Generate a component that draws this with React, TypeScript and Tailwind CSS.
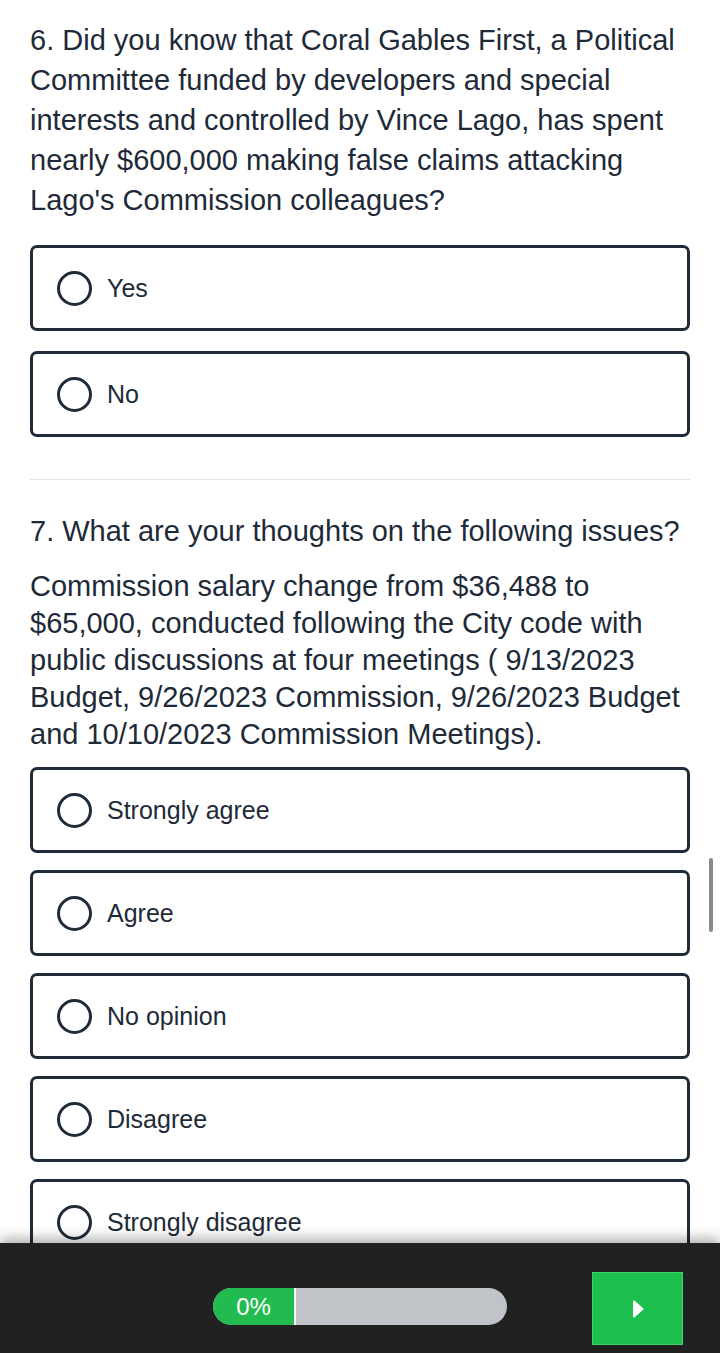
import { Fragment } from 'react';

const font = { fontFamily: '"Liberation Sans", Arial, sans-serif' };

function Option({ label, gap }: { label: string; gap: string }) {
    return (
        <div className={`flex items-center h-[86px] border-[3px] border-[#1f2b38] rounded-[7px] pl-[24px] ${gap}`}>
            <span className="w-[35px] h-[35px] rounded-full border-[3px] border-[#1f2b38] shrink-0" />
            <span className="ml-[15px] text-[25px] text-[#1e2a38] leading-none">{label}</span>
        </div>
    );
}

export default function App() {
    const q7 = ['Strongly agree', 'Agree', 'No opinion', 'Disagree', 'Strongly disagree'];

    return (
        <div className="relative h-[1353px] w-[720px] flex flex-col bg-white overflow-hidden" style={font}>
            <div className="flex-1 overflow-hidden px-[30px] pt-[20px]">
                <p className="text-[29px] leading-[40px] text-[#1e2a38]">
                    6. Did you know that Coral Gables First, a Political Committee funded by developers and special interests and controlled by Vince Lago, has spent nearly $600,000 making false claims attacking Lago's Commission colleagues?
                </p>

                <div className="mt-[25px]">
                    <Option label="Yes" gap="" />
                    <Option label="No" gap="mt-[20px]" />
                </div>

                <div className="mt-[42px] h-[1px] bg-[#e3e5e8]" />

                <p className="mt-[31px] text-[29px] leading-[40px] text-[#1e2a38] whitespace-nowrap">
                    7. What are your thoughts on the following issues?
                </p>
                <p className="mt-[17px] text-[29px] leading-[37px] text-[#1e2a38] -mr-[10px]">
                    Commission salary change from $36,488 to $65,000, conducted following the City code with public discussions at four meetings ( 9/13/2023 Budget, 9/26/2023 Commission, 9/26/2023 Budget and 10/10/2023 Commission Meetings).
                </p>

                <div className="mt-[14px]">
                    {q7.map((label, i) => (
                        <Fragment key={label}>
                            <Option label={label} gap={i === 0 ? '' : 'mt-[17px]'} />
                        </Fragment>
                    ))}
                </div>
            </div>

            <div className="h-[110px] shrink-0 bg-[#212121] shadow-[0_-5px_12px_rgba(0,0,0,0.3)] grid grid-cols-[1fr_294px_1fr] z-10">
                <div />
                <div className="pt-[45px]">
                    <div className="h-[37px] rounded-full bg-[#c0c4c9] flex overflow-hidden">
                        <div className="w-[83px] bg-[#22bb4f] flex items-center justify-center border-r-[2px] border-white">
                            <span className="text-[24px] text-white leading-none">0%</span>
                        </div>
                    </div>
                </div>
                <div className="flex justify-end pr-[37px] pt-[29px]">
                    <button className="w-[91px] h-[73px] bg-[#1dbf4e] border border-[#3fd26a] flex items-center justify-center">
                        <svg width="12" height="18" viewBox="0 0 12 18">
                            <path d="M2 1.5 L10.5 9 L2 16.5 Z" fill="white" stroke="white" strokeWidth="2" strokeLinejoin="round" />
                        </svg>
                    </button>
                </div>
            </div>

            <div className="absolute right-[7px] top-[858px] w-[4px] h-[74px] rounded-full bg-[#8a8a8a]" />
        </div>
    );
}
